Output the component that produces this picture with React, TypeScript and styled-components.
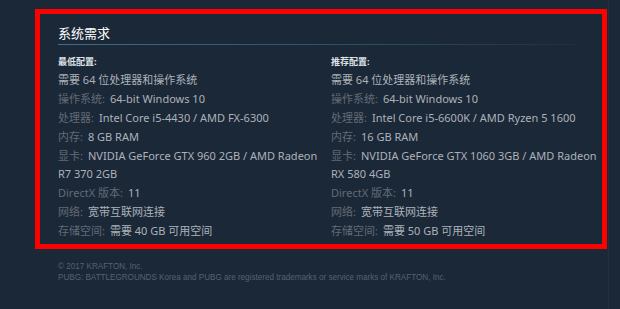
import styled, { createGlobalStyle } from "styled-components";

const GlobalStyle = createGlobalStyle`
  html, body {
    margin: 0;
    padding: 0;
    background: #1b2838;
  }
  body {
    font-family: "Noto Sans", "Noto Sans CJK SC", sans-serif;
  }
`;

const Page = styled.main`
  width: 609px;
  height: 309px;
  box-sizing: border-box;
  padding: 9px 0 0 35px;
  border-right: 1px solid #202e3e;
`;

const Highlight = styled.section`
  width: 572px;
  height: 240px;
  box-sizing: border-box;
  border: 5px solid #ff0000;
  padding: 10px 3px 0 18px;
`;

const Title = styled.h2`
  margin: 0 0 9px 0;
  padding: 0 0 2px 0;
  font-size: 13px;
  line-height: 18px;
  font-weight: normal;
  color: #ffffff;
  width: 519px;
  &::after {
    content: "";
    display: block;
    height: 1px;
    margin-top: 2px;
    background: linear-gradient(to right, #3b6e8c 0%, #2d4d63 60%, rgba(59, 110, 140, 0.1) 100%);
  }
`;

const Columns = styled.div`
  display: grid;
  grid-template-columns: 273px 1fr;
`;

const Column = styled.div<{ $gap: number }>`
  padding-right: ${(p) => p.$gap}px;
`;

const Caption = styled.strong`
  display: block;
  font-size: 9px;
  line-height: 12px;
  font-weight: bold;
  color: #dfe3e6;
  margin-bottom: 3px;
`;

const List = styled.ul`
  list-style: none;
  margin: 0;
  padding: 0;
`;

const Item = styled.li`
  font-size: 11px;
  line-height: 18px;
  margin-bottom: 1px;
  color: #acb2b8;
`;

const Label = styled.span`
  color: #626b75;
  margin-right: 5px;
`;

const Legal = styled.footer`
  margin: 12px 0 0 23px;
  width: 600px;
  font-family: "Liberation Sans", Arial, sans-serif;
  font-size: 9px;
  line-height: 11px;
  color: #56636d;
  transform: scaleX(0.9);
  transform-origin: left top;
`;

type Spec = { label?: string; value: string };

const minimum: Spec[] = [
  { value: "需要 64 位处理器和操作系统" },
  { label: "操作系统:", value: "64-bit Windows 10" },
  { label: "处理器:", value: "Intel Core i5-4430 / AMD FX-6300" },
  { label: "内存:", value: "8 GB RAM" },
  { label: "显卡:", value: "NVIDIA GeForce GTX 960 2GB / AMD Radeon R7 370 2GB" },
  { label: "DirectX 版本:", value: "11" },
  { label: "网络:", value: "宽带互联网连接" },
  { label: "存储空间:", value: "需要 40 GB 可用空间" },
];

const recommended: Spec[] = [
  { value: "需要 64 位处理器和操作系统" },
  { label: "操作系统:", value: "64-bit Windows 10" },
  { label: "处理器:", value: "Intel Core i5-6600K / AMD Ryzen 5 1600" },
  { label: "内存:", value: "16 GB RAM" },
  { label: "显卡:", value: "NVIDIA GeForce GTX 1060 3GB / AMD Radeon RX 580 4GB" },
  { label: "DirectX 版本:", value: "11" },
  { label: "网络:", value: "宽带互联网连接" },
  { label: "存储空间:", value: "需要 50 GB 可用空间" },
];

function SpecList(props: { caption: string; specs: Spec[]; gap: number }) {
  return (
    <Column $gap={props.gap}>
      <Caption>{props.caption}</Caption>
      <List>
        {props.specs.map((s, i) => (
          <Item key={i}>
            {s.label && <Label>{s.label}</Label>}
            {s.value}
          </Item>
        ))}
      </List>
    </Column>
  );
}

function App() {
  return (
    <Page>
      <GlobalStyle />
      <Highlight>
        <Title>系统需求</Title>
        <Columns>
          <SpecList caption="最低配置:" specs={minimum} gap={6} />
          <SpecList caption="推荐配置:" specs={recommended} gap={0} />
        </Columns>
      </Highlight>
      <Legal>
        © 2017 KRAFTON, Inc.
        <br />
        PUBG: BATTLEGROUNDS Korea and PUBG are registered trademarks or service marks of KRAFTON, Inc.
      </Legal>
    </Page>
  );
}

export default App;
